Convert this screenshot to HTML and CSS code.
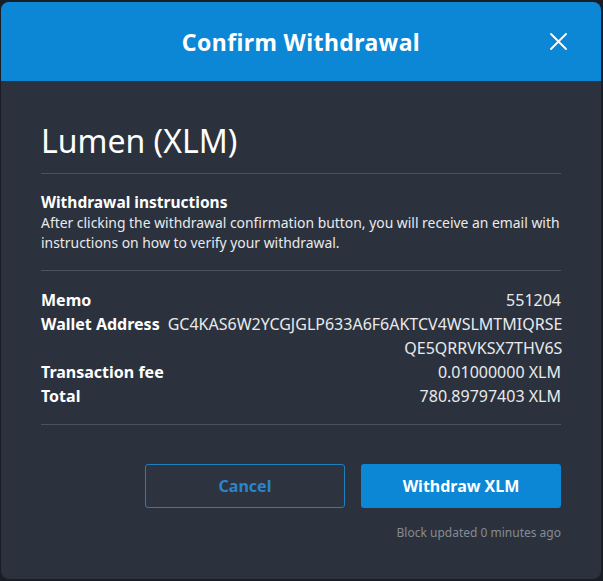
FILE: index.html
```html
<!DOCTYPE html>
<html lang="en">
<head>
<meta charset="utf-8">
<title>Confirm Withdrawal</title>
<link rel="stylesheet" href="styles.css">
</head>
<body>
<div class="modal">
  <header class="modal-header">
    <span class="spacer"></span>
    <h1 class="modal-title">Confirm Withdrawal</h1>
    <button class="close" aria-label="Close">
      <svg width="17" height="17" viewBox="0 0 17 17"><path d="M1 1 L16 16 M16 1 L1 16" stroke="#fff" stroke-width="1.8" fill="none" stroke-linecap="round"/></svg>
    </button>
  </header>
  <div class="modal-body">
    <h2 class="coin">Lumen (XLM)</h2>
    <section class="instructions">
      <h3 class="inst-title">Withdrawal instructions</h3>
      <p class="inst-text">After clicking the withdrawal confirmation button, you will receive an email with instructions on how to verify your withdrawal.</p>
    </section>
    <dl class="details">
      <div class="row"><dt>Memo</dt><dd>551204</dd></div>
      <div class="row"><dt>Wallet Address</dt><dd class="addr">GC4KAS6W2YCGJGLP633A6F6AKTCV4WSLMTMIQRSE<br>QE5QRRVKSX7THV6S</dd></div>
      <div class="row"><dt>Transaction fee</dt><dd>0.01000000 XLM</dd></div>
      <div class="row"><dt>Total</dt><dd>780.89797403 XLM</dd></div>
    </dl>
    <div class="actions">
      <button class="btn btn-cancel">Cancel</button>
      <button class="btn btn-primary">Withdraw XLM</button>
    </div>
    <p class="updated">Block updated 0 minutes ago</p>
  </div>
</div>
</body>
</html>
```
FILE: styles.css
```css
* { box-sizing: border-box; }
html, body { margin: 0; padding: 0; }
body {
  background: #181d26;
  font-family: "Noto Sans", "Open Sans", sans-serif;
  color: #ffffff;
  width: 603px;
  height: 581px;
  overflow: hidden;
}
.modal {
  margin: 2px 2px 0 1px;
  height: 577px;
  background: #2b323d;
  border-radius: 8px;
  overflow: hidden;
}
.modal-header {
  height: 79px;
  background: #0b87d6;
  display: grid;
  grid-template-columns: 1fr auto 1fr;
  align-items: center;
}
.modal-title {
  margin: 0;
  font-size: 23px;
  font-weight: 700;
  letter-spacing: 0.4px;
}
.close {
  justify-self: end;
  margin-right: 34px;
  background: none;
  border: 0;
  padding: 0;
  width: 17px;
  height: 17px;
  display: flex;
  cursor: pointer;
}
.modal-body {
  padding: 0 40px;
}
.coin {
  margin: 0;
  padding-top: 38px;
  font-size: 32px;
  font-weight: 400;
  line-height: 44px;
  padding-bottom: 10px;
  border-bottom: 1px solid #4a525e;
}
.instructions {
  padding: 17px 0 17px;
  border-bottom: 1px solid #4a525e;
}
.inst-title {
  margin: 0;
  font-size: 15.5px;
  font-weight: 700;
  line-height: 22px;
}
.inst-text {
  margin: 0;
  font-size: 13.9px;
  line-height: 20px;
  color: #e8eaed;
}
.details {
  margin: 0;
  padding: 17px 0 16px;
  border-bottom: 1px solid #4a525e;
}
.row {
  display: flex;
  justify-content: space-between;
  gap: 8px;
}
.row dt {
  font-size: 16px;
  font-weight: 700;
  line-height: 24px;
  white-space: nowrap;
}
.row dd {
  margin: 0;
  font-size: 16px;
  line-height: 24px;
  text-align: right;
  color: #e8eaed;
}
.actions {
  display: flex;
  justify-content: flex-end;
  gap: 16px;
  margin-top: 39px;
}
.btn {
  width: 200px;
  height: 44px;
  border-radius: 3px;
  font-family: inherit;
  font-size: 16px;
  font-weight: 700;
  cursor: pointer;
}
.btn-cancel {
  background: #2d3440;
  border: 1px solid #1f7fc2;
  color: #2a85cc;
}
.btn-primary {
  background: #0b87d6;
  border: 0;
  color: #ffffff;
}
.updated {
  margin: 17px 0 0;
  text-align: right;
  font-size: 12px;
  line-height: 16px;
  color: #858b94;
}
```
